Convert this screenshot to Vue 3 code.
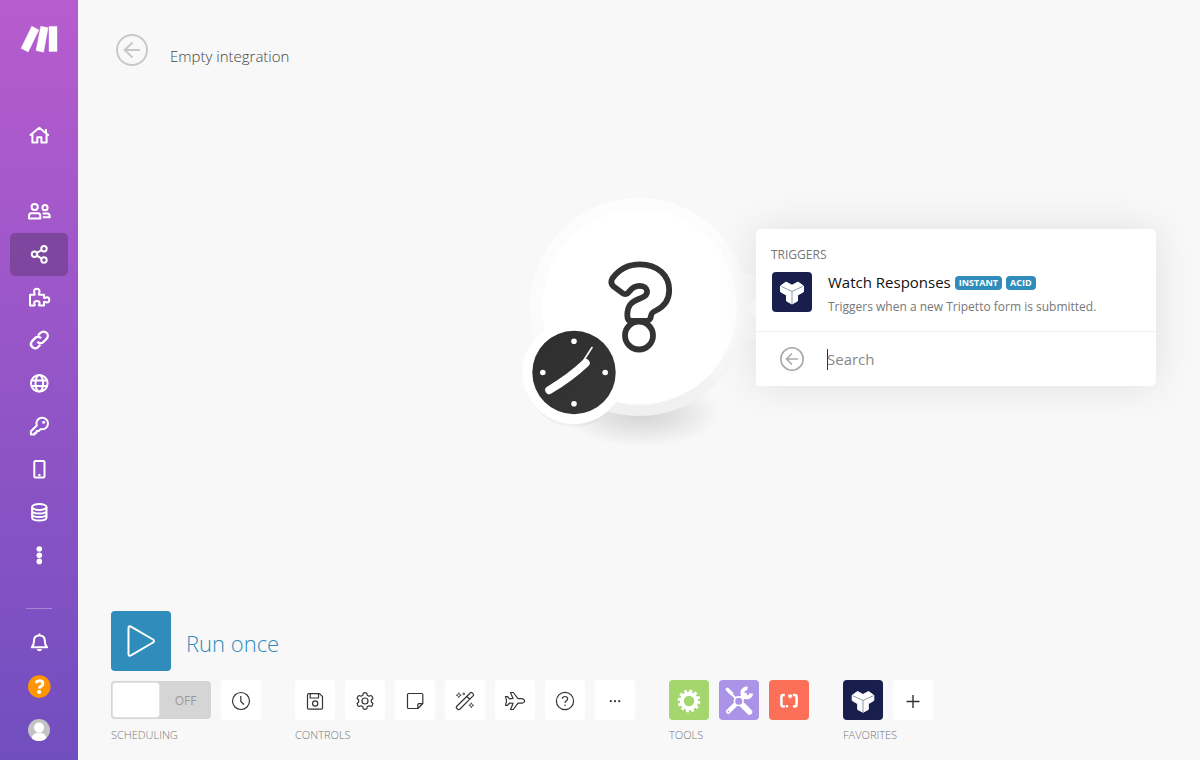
<script setup>
import { ref } from 'vue'

const scheduled = ref(false)
const query = ref('')

const nav = [
  { id: 'team', label: 'Team' },
  { id: 'scenarios', label: 'Scenarios', active: true },
  { id: 'templates', label: 'Templates' },
  { id: 'connections', label: 'Connections' },
  { id: 'webhooks', label: 'Webhooks' },
  { id: 'keys', label: 'Keys' },
  { id: 'devices', label: 'Devices' },
  { id: 'data', label: 'Data stores' },
  { id: 'more', label: 'More' }
]
</script>

<template>
  <div class="app">
    <aside class="sidebar">
      <a class="logo" href="#" aria-label="Home page">
        <svg width="38" height="28" viewBox="20 25 38 28">
          <path d="M31.8 26.2 38.9 29.9 28.2 52 21 48.3ZM40.8 26.2 48.1 27.7 43.6 52.2 36 50.6ZM49 26.4H57V51.4H49Z" fill="#fff" stroke="#fff" stroke-width=".4" stroke-linejoin="round" />
        </svg>
      </a>
      <nav class="nav">
        <a class="item home" href="#" aria-label="Dashboard">
          <svg class="ico" viewBox="0 0 24 24">
            <path d="M2.8 13.5 12.3 5.7 21.8 13.5M5.4 12V20.5H10.3V15.3H14.4V20.5H19.6V12M19 10.5V7" />
          </svg>
        </a>
        <a v-for="n in nav" :key="n.id" class="item" :class="{ active: n.active }" href="#" :aria-label="n.label">
          <svg class="ico" viewBox="0 0 24 24">
            <g v-if="n.id === 'team'">
              <circle cx="7.7" cy="8" r="3.1" /><circle cx="18" cy="8.7" r="2.6" />
              <path d="M4.3 14.3H11Q13.3 14.3 13.3 17.3V19.5H2V17.3Q2 14.3 4.3 14.3ZM15.6 14.6H20.5Q22.8 14.6 22.8 18.2H15.8" />
            </g>
            <g v-else-if="n.id === 'scenarios'">
              <circle cx="7.5" cy="12.3" r="2.7" /><circle cx="17" cy="6.7" r="2.7" /><circle cx="17" cy="18" r="2.7" />
              <path d="M9.9 10.9 14.6 8M9.9 13.7 14.6 16.6" />
            </g>
            <path v-else-if="n.id === 'templates'" d="M3 9.8H7.4C8.4 9.8 7.1 8.4 7.1 6.5Q7.1 3.8 9.8 3.8T12.5 6.5C12.5 8.4 11.2 9.8 12.2 9.8H17V12.5C17 13.7 18.3 12.2 20 12.2Q22.3 12.2 22.3 14.8T20 17.4C18.3 17.4 17 15.9 17 17.1V20.5H12.4C11.4 20.5 12.6 19 12.6 18Q12.6 15.9 9.9 15.9T7.2 18C7.2 19 8.4 20.5 7.4 20.5H3Z" />
            <path v-else-if="n.id === 'connections'" d="M10.4 13.9A4.2 4.2 0 0 0 16.4 14L19.6 10.7A4.2 4.2 0 0 0 13.6 4.8L11 7.4M14 10.3A4.2 4.2 0 0 0 8 10.1L4.9 13.4A4.2 4.2 0 0 0 10.8 19.3L13.3 16.8" stroke-width="2.3" />
            <g v-else-if="n.id === 'webhooks'">
              <circle cx="12.3" cy="12.3" r="8.3" /><ellipse cx="12.3" cy="12.3" rx="3.8" ry="8.3" />
              <path d="M4.4 9.6H20.2M4.4 15H20.2" />
            </g>
            <g v-else-if="n.id === 'keys'">
              <path d="M9.8 11.6A5.8 5.8 0 1 1 13.6 15.1L11.8 17H9.5V19.1H7.6V20.6H3.9V17.2Z" />
              <circle class="fill" cx="16.6" cy="8.2" r="1.5" />
            </g>
            <g v-else-if="n.id === 'devices'">
              <rect x="7.3" y="3.9" width="10.2" height="16.6" rx="1.2" />
              <circle class="fill" cx="12.4" cy="18" r="1.2" />
            </g>
            <g v-else-if="n.id === 'data'">
              <ellipse cx="12.3" cy="7" rx="7.2" ry="3" />
              <path d="M5.1 7V17.5C5.1 21.5 19.5 21.5 19.5 17.5V7M5.1 10.6C5.1 14.6 19.5 14.6 19.5 10.6M5.1 14.1C5.1 18.1 19.5 18.1 19.5 14.1" />
            </g>
            <g v-else class="fill">
              <circle cx="12.3" cy="6" r="2.8" /><circle cx="12.3" cy="12.2" r="2.8" /><circle cx="12.3" cy="18.4" r="2.8" />
            </g>
          </svg>
        </a>
      </nav>
      <div class="bottom">
        <hr class="rule" />
        <button class="round" aria-label="Notifications">
          <svg class="ico" viewBox="0 0 24 24">
            <path d="M4.8 17.3H20C18.3 15.6 17.8 14.3 17.8 10.7Q17.8 5.5 12.4 5.5T7 10.7C7 14.3 6.5 15.6 4.8 17.3ZM12.4 5V3.6" />
            <path class="fill" d="M9.8 19H15Q14.6 21.3 12.4 21.3T9.8 19Z" />
          </svg>
        </button>
        <button class="round" aria-label="Help">
          <svg width="24" height="24" viewBox="0 0 24 24">
            <circle cx="12.3" cy="12.6" r="11.3" fill="#ff9500" />
            <path d="M8.7 8.9Q10 6.8 12.4 6.8 15.9 6.8 15.9 9.6 15.9 11.2 14.2 12.2 12.4 13 12.2 14.6" fill="none" stroke="#fff" stroke-width="3" />
            <circle cx="12.2" cy="18" r="2.1" fill="#fff" />
          </svg>
        </button>
        <button class="round" aria-label="Profile">
          <svg width="24" height="24" viewBox="0 0 24 24">
            <clipPath id="avatar"><circle cx="12" cy="12" r="11" /></clipPath>
            <g clip-path="url(#avatar)">
              <path d="M0 0H24V24H0Z" fill="#c3c3c3" />
              <circle cx="12" cy="9.6" r="5" fill="#fff" /><ellipse cx="12" cy="20.4" rx="7.4" ry="5.8" fill="#fff" />
            </g>
          </svg>
        </button>
      </div>
    </aside>

    <main class="main">
      <header class="head">
        <button class="back" aria-label="Back">
          <svg width="32" height="32" viewBox="0 0 32 32" fill="none" stroke="#c8c8c8" stroke-width="2">
            <circle cx="16" cy="16" r="15" />
            <path d="M24 16H8.5M16.5 8.5 8.7 16 16.5 23.5" />
          </svg>
        </button>
        <h1 class="title">Empty integration</h1>
      </header>

      <section class="canvas">
        <div class="node">
          <svg class="art" width="240" height="260" viewBox="519 192 240 260">
            <defs>
              <linearGradient id="rim" x1="0" y1="0" x2="0" y2="1">
                <stop offset="0" stop-color="#fdfdfd" /><stop offset=".6" stop-color="#fbfbfb" /><stop offset="1" stop-color="#efefef" />
              </linearGradient>
              <linearGradient id="dark" x1="0" y1="0" x2="1" y2="1">
                <stop offset="0" stop-color="#2e2e2e" /><stop offset="1" stop-color="#363636" />
              </linearGradient>
              <radialGradient id="shade">
                <stop offset="0" stop-color="#000" stop-opacity=".15" /><stop offset=".5" stop-color="#000" stop-opacity=".08" /><stop offset="1" stop-color="#000" stop-opacity="0" />
              </radialGradient>
            </defs>
            <ellipse cx="642" cy="413" rx="78" ry="34" fill="url(#shade)" />
            <circle cx="748" cy="307" r="33" fill="#fbfbfb" />
            <path d="M759 296V320L747 308Z" fill="#fff" />
            <circle cx="639" cy="307" r="109" fill="url(#rim)" />
            <circle cx="639.5" cy="307" r="97.5" fill="#fff" />
            <g fill="none" stroke="#333" stroke-width="5.8" stroke-linejoin="round">
              <path d="M612.5 278.2Q622.5 264.3 640 264.3C657.5 264.3 669.2 275.5 669.2 290Q669.2 304 656 310.5C649.5 313.7 652 314.5 650.3 318.5Q649 321 645 321H631.5Q627.3 321 627.3 315.5C627.3 305.5 631 302 640 298.5C650.5 295 648.5 285.8 639.5 285.8C630 285.8 630 293.8 625.5 294.2Q624 294.3 622 292.7L613.3 286.2Q609.8 283 612.5 278.2Z" />
              <circle cx="639" cy="335.5" r="14" />
            </g>
            <ellipse cx="574" cy="378" rx="48" ry="49" fill="#000" opacity=".03" />
            <circle cx="574" cy="372.5" r="51.5" fill="#fff" />
            <circle cx="574" cy="372.5" r="41.7" fill="url(#dark)" />
            <g fill="#fff">
              <circle cx="574" cy="341.3" r="2.8" /><circle cx="574" cy="403.7" r="2.8" />
              <circle cx="542.8" cy="372.5" r="2.8" /><circle cx="605.2" cy="372.5" r="2.8" />
            </g>
            <g fill="none" stroke="#fff" stroke-linecap="round">
              <path d="M549.2 390.2Q571 377 585.7 363" stroke-width="8" />
              <path d="M582 363 592 347.5" stroke-width="1.6" />
            </g>
          </svg>

          <div class="popover">
            <section class="triggers">
              <h2 class="caption">TRIGGERS</h2>
              <a class="trigger" href="#">
                <svg class="tripetto" viewBox="0 0 40 40"><path d="M8.5 14 14 10 20 13.2 26 10 31.5 14V19.7L25.5 23.2V29L20 32L14.5 29V23.2L8.5 19.7Z" fill="#fff" stroke="#fff" stroke-linejoin="round" /><path d="M9.5 14.5 20 19.5 30.5 14.5M20 19.5V32" fill="none" stroke="#747b98" stroke-width=".8" /></svg>
                <span class="copy">
                  <span class="name">Watch Responses <b class="badge">INSTANT</b><b class="badge">ACID</b></span>
                  <span class="desc">Triggers when a new Tripetto form is submitted.</span>
                </span>
              </a>
            </section>
            <div class="search">
              <button class="back" aria-label="Back to apps">
                <svg width="24" height="24" viewBox="0 0 24 24" fill="none" stroke="#aaa" stroke-width="1.6">
                  <circle cx="12" cy="12" r="11.2" />
                  <path d="M18 12H6.5M12 6.5 6.5 12 12 17.5" />
                </svg>
              </button>
              <input v-model="query" class="query" type="text" placeholder="Search" aria-label="Search" />
            </div>
          </div>
        </div>
      </section>

      <footer class="foot">
        <button class="run">
          <span class="play">
            <svg width="60" height="60" viewBox="0 0 60 60"><path d="M17.5 17V43Q17.5 45.5 20 44.3L42 31.5Q44 30 42 28.5L20 15.7Q17.5 14.5 17.5 17Z" fill="none" stroke="#fff" stroke-width="2" /></svg>
          </span>
          <span class="runtext">Run once</span>
        </button>
        <div class="groups">
          <section class="group">
            <div class="row">
              <label class="toggle"><input v-model="scheduled" type="checkbox" class="knob" aria-label="Scheduling" /><span class="state">{{ scheduled ? 'ON' : 'OFF' }}</span></label>
              <button class="tile" aria-label="Schedule settings">
                <svg class="line" viewBox="0 0 40 40"><circle cx="20" cy="21" r="8.5" /><path d="M19.8 16V21.5L23 24.5" /></svg>
              </button>
            </div>
            <h3 class="label">SCHEDULING</h3>
          </section>
          <section class="group">
            <div class="row">
              <button class="tile" aria-label="Save">
                <svg class="line" viewBox="0 0 40 40"><path d="M12.5 15Q12.5 13.7 13.8 13.7H24.5L27.5 16.7V28Q27.5 29.1 26.3 29.1H13.8Q12.5 29.1 12.5 28ZM15.2 14V18H23.5V14" /><circle cx="20.2" cy="23.5" r="2.6" /></svg>
              </button>
              <button class="tile" aria-label="Scenario settings">
                <svg class="line" viewBox="0 0 40 40"><circle cx="20" cy="21" r="3" /><path d="M18.3 13.2Q20 12.2 21.7 13.2L22.2 15.2 24 16.2 26 15.5Q27.7 16.5 27.9 18.5L26.3 20V22L27.9 23.5Q27.7 25.5 26 26.5L24 25.8 22.2 26.8 21.7 28.8Q20 29.8 18.3 28.8L17.8 26.8 16 25.8 14 26.5Q12.3 25.5 12.1 23.5L13.7 22V20L12.1 18.5Q12.3 16.5 14 15.5L16 16.2 17.8 15.2Z" /></svg>
              </button>
              <button class="tile" aria-label="Notes">
                <svg class="line" viewBox="0 0 40 40"><path d="M22.8 28.5H13.5Q12.5 28.5 12.5 27.5V14.5Q12.5 13.5 13.5 13.5H26.8Q27.8 13.5 27.8 14.5V23.5ZM22.8 28.3V24.7Q22.8 23.7 23.8 23.7H27.6" /></svg>
              </button>
              <button class="tile" aria-label="Auto-align">
                <svg class="line" viewBox="0 0 40 40"><path d="M11.5 26.5 25.5 12.7Q26.2 12.2 26.9 12.7L28.3 14.2Q29 15 28.3 15.7L14.5 29.5Q13.7 30 13 29.5L11.5 28Q10.9 27.3 11.5 26.5ZM21.8 16.5 24.7 19.3" /><path class="spark" d="M13.8 12.7 14.5 14.5 16.2 15.2 14.5 15.9 13.8 17.7 13.1 15.9 11.3 15.2 13.1 14.5ZM18.8 12.7 19.2 13.5 20 13.9 19.2 14.3 18.8 15.1 18.4 14.3 17.6 13.9 18.4 13.5ZM26.3 22.8 27 24.6 28.7 25.3 27 26 26.3 27.8 25.6 26 23.8 25.3 25.6 24.6Z" /></svg>
              </button>
              <button class="tile" aria-label="Explain flow">
                <svg class="line" viewBox="0 0 40 40"><path d="M10.5 16.5H12.5L14.5 18.8 18 18.4 15.5 12.5H18.3L23 18.6H27Q29.7 19.5 29.7 20.9T27 23.2H23L18.3 29.5H15.5L18 23.4 14.5 23 12.5 25.3H10.5L11.6 20.9Z" /></svg>
              </button>
              <button class="tile" aria-label="Help">
                <svg class="line" viewBox="0 0 40 40"><circle cx="20" cy="21" r="8.6" /><path d="M17.3 18.8Q17.5 16.5 20 16.5T22.7 18.7C22.7 20.7 20 20.7 20 22.9" /><circle class="dot" cx="20" cy="25.3" r=".8" /></svg>
              </button>
              <button class="tile" aria-label="More options">
                <svg class="line" viewBox="0 0 40 40"><g class="dot"><circle cx="15.8" cy="21.2" r="1.1" /><circle cx="20" cy="21.2" r="1.1" /><circle cx="24.2" cy="21.2" r="1.1" /></g></svg>
              </button>
            </div>
            <h3 class="label">CONTROLS</h3>
          </section>
          <section class="group">
            <div class="row">
              <button class="tile green" aria-label="Flow control">
                <svg viewBox="0 0 40 40" fill="none" stroke="#fff"><circle cx="20" cy="21" r="7.2" stroke-width="4" /><circle cx="20" cy="21" r="9.9" stroke-width="3" stroke-dasharray="2.8 2.384" /></svg>
              </button>
              <button class="tile purple" aria-label="Tools">
                <svg viewBox="0 0 40 40" fill="none" stroke="#fff" stroke-linecap="round"><path d="M9.5 11 16.5 18" stroke-width="2" /><path d="M8.5 9.5 12.5 13.5" stroke-width="3.6" /><path d="M23.5 25 30.5 32" stroke-width="5.6" /><path d="M9.2 31.7 26 15" stroke-width="4.6" /><path d="M28.5 8.5A4.5 4.5 0 1 0 32.3 13.5" stroke-width="3.8" stroke-linecap="butt" /><circle cx="19.7" cy="21.2" r="4.3" stroke-width="1.6" fill="#ab93e8" /><circle cx="9.5" cy="31.5" r=".8" fill="#ab93e8" stroke="none" /></svg>
              </button>
              <button class="tile red" aria-label="Text parser">
                <svg viewBox="0 0 40 40" fill="none" stroke="#fff"><path d="M15.8 15H14.5Q12.4 15 12.4 17V24.5Q12.4 26.5 14.5 26.5H15.8M24 15H25.5Q27.6 15 27.6 17V24.5Q27.6 26.5 25.5 26.5H24" stroke-width="2.5" /><path d="M21.2 14V18.4M19.2 15.1 23.2 17.3M23.2 15.1 19.2 17.3" stroke-width="1.1" /><circle cx="18" cy="26.3" r="1.3" fill="#fff" stroke="none" /></svg>
              </button>
            </div>
            <h3 class="label">TOOLS</h3>
          </section>
          <section class="group">
            <div class="row">
              <button class="tile" aria-label="Tripetto">
                <svg class="tripetto" viewBox="0 0 40 40"><path d="M9.2 15.3 14.5 11.5 20 14.5 25.5 11.5 30.8 15.3V20.5L25.3 23.8V29.5L20 32.3L14.7 29.5V23.8L9.2 20.5Z" fill="#fff" stroke="#fff" stroke-linejoin="round" /><path d="M10 15.8 20 20.5 30 15.8M20 20.5V32.5" fill="none" stroke="#747b98" stroke-width=".8" /></svg>
              </button>
              <button class="tile" aria-label="Add favorite">
                <svg class="line" viewBox="0 0 40 40"><path d="M13.5 21.5H26.5M20 15V28" stroke-width="1.4" /></svg>
              </button>
            </div>
            <h3 class="label">FAVORITES</h3>
          </section>
        </div>
      </footer>
    </main>
  </div>
</template>

<style>
body { background: #f8f8f8; }
</style>

<style scoped>
.app { display: flex; min-height: 100vh; background: #f8f8f8; color: #333; font-family: "Open Sans", "Noto Sans", sans-serif; }
button { padding: 0; border: 0; background: none; font: inherit; color: inherit; cursor: pointer; }
svg { display: block; }
h1, h2, h3 { margin: 0; font-weight: 400; }
a { color: inherit; text-decoration: none; }

.sidebar { flex: none; width: 78px; display: flex; flex-direction: column; background: linear-gradient(#b75ccf, #714ebf); }
.logo { display: flex; justify-content: center; padding: 25px 0 60px; }
.nav { display: flex; flex-direction: column; padding: 0 10px; }
.item { height: 42px; padding-bottom: 1px; display: grid; place-items: center; border-radius: 5px; }
.home { margin-bottom: 34px; }
.active { background: #7f469f; }
.ico { width: 24px; height: 24px; fill: none; stroke: #fff; stroke-width: 2; stroke-linejoin: round; }
.ico .fill { fill: #fff; stroke: none; }
.bottom { margin-top: auto; padding-bottom: 18px; display: flex; flex-direction: column; align-items: center; gap: 20px; }
.rule { width: 26px; margin: 0 0 1px; border: 0; border-top: 1px solid rgba(255, 255, 255, .3); }
.round { border-radius: 50%; }

.main { flex: 1; min-width: 0; display: flex; flex-direction: column; }
.head { display: flex; gap: 22px; padding: 34px 38px 0; }
.title { font-size: 15px; line-height: 20px; padding-top: 12px; font-weight: 300; color: #444; }
.canvas { flex: 1; display: flex; justify-content: center; align-items: flex-start; padding-top: 126px; }
.node { position: relative; }
.popover { position: absolute; left: 237px; top: 37px; width: 400px; background: #fff; border-radius: 5px 5px 5px 0; box-shadow: 0 0 40px rgba(0, 0, 0, .1); }
.triggers { padding: 17px 15px 15px; border-bottom: 1px solid #f1f1f1; }
.caption { font-size: 12px; line-height: 18px; color: #777; }
.trigger { display: flex; gap: 16px; padding: 8px 0 0 1px; }
.tripetto { width: 40px; height: 40px; border-radius: 4px; background: #181f4d; }
.copy { display: flex; flex-direction: column; }
.name { display: flex; align-items: center; gap: 4px; font-size: 15px; line-height: 20px; color: #111; }
.badge { margin-top: 2px; padding: 0 4px; border-radius: 4px; background: #2f8cbb; color: #fff; font-size: 9px; line-height: 14px; }
.desc { font-size: 12px; line-height: 18px; padding-top: 6px; color: #777; white-space: nowrap; }
.search { display: flex; align-items: center; gap: 23px; height: 54px; padding: 0 24px; }
.query { flex: 1; min-width: 0; height: 21px; padding: 0; border: 0; outline: 0; font: 400 15px "Open Sans", sans-serif; color: #333; background: linear-gradient(#333, #333) 0 0 / 1px 21px no-repeat #fff; }
.query::placeholder { color: #888; opacity: 1; }

.foot { padding: 0 33px 17px; }
.run { display: flex; align-items: center; gap: 15px; color: #2f8cbb; }
.play { border-radius: 4px; background: #2f8cbb; }
.runtext { font-size: 22px; line-height: 30px; padding-top: 3px; font-weight: 300; }
.groups { display: flex; gap: 34px; padding-top: 9px; }
.row { display: flex; gap: 10px; align-items: center; }
.toggle { width: 96px; height: 34px; padding: 2px; display: flex; border-radius: 4px; background: #d5d5d5; cursor: pointer; }
.knob { appearance: none; width: 46px; height: 34px; margin: 0; border-radius: 3px; background: #fff; box-shadow: 0 0 0 1px #e2e2e2; }
.state { flex: 1; text-align: center; font-size: 12px; line-height: 35px; padding-left: 3px; color: #999; }
.tile { width: 40px; height: 40px; border-radius: 4px; background: #fff; }
.tile svg { width: 40px; height: 40px; }
.line { fill: none; stroke: #333; stroke-width: 1.2; stroke-linejoin: round; }
.line .dot { fill: #333; stroke: none; }
.line .spark { stroke-width: .8; }
.green { background: #a3d76e; }
.purple { background: #ab93e8; }
.red { background: #fc7059; }
.label { font-size: 11px; line-height: 16px; padding-top: 7px; color: #777; font-weight: 300; }
</style>
